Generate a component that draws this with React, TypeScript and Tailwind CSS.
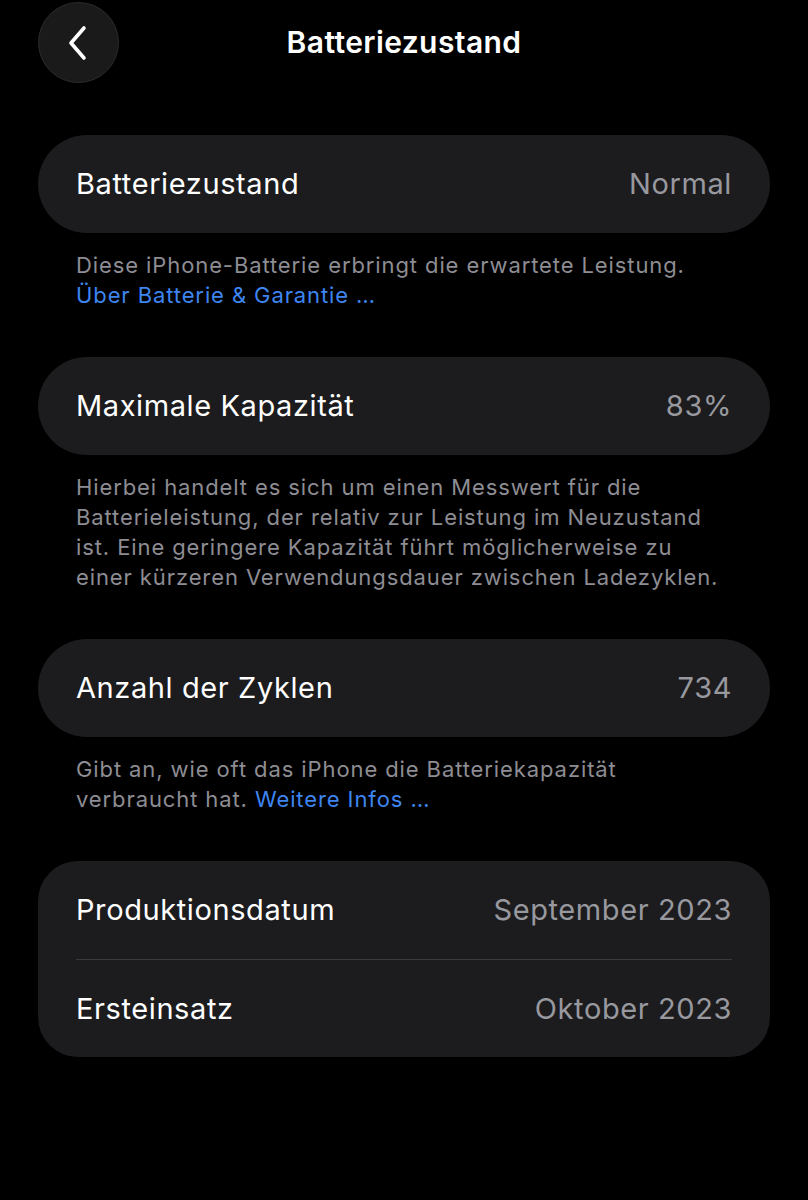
import React from "react";

type Row = { label: string; value: string };

function Card({ rows }: { rows: Row[] }) {
  const single = rows.length === 1;
  return (
    <div
      className={
        "bg-[#1c1c1e] px-[38px] " + (single ? "rounded-[49px]" : "rounded-[40px]")
      }
    >
      {rows.map((r, i) => (
        <div
          key={r.label}
          className={
            "flex h-[98px] items-center justify-between " +
            (i > 0 ? "border-t border-[#3a3a3c]" : "")
          }
        >
          <span className="text-[29px] tracking-[0.6px] text-white">{r.label}</span>
          <span className="text-[29px] tracking-[0.6px] text-[#98989f]">{r.value}</span>
        </div>
      ))}
    </div>
  );
}

function Note({ children }: { children: React.ReactNode }) {
  return (
    <p className="mt-[17px] mb-[47px] whitespace-nowrap px-[38px] text-[22px] leading-[30px] tracking-[0.9px] text-[#8d8d93]">
      {children}
    </p>
  );
}

export default function App() {
  return (
    <div
      className="min-h-[1200px] bg-black px-[38px] antialiased"
      style={{ fontFamily: "Inter, 'Noto Sans', sans-serif" }}
    >
      <header className="relative flex h-[84px] items-center justify-center">
        <button className="absolute left-0 top-[2px] flex h-[81px] w-[81px] items-center justify-center rounded-full border border-[#2c2c2e] bg-[#1a1a1a]">
          <svg width="30" height="40" viewBox="0 0 30 40" fill="none">
            <path
              d="M20 5 L7 20 L20 35"
              stroke="white"
              strokeWidth="3.6"
              strokeLinecap="round"
              strokeLinejoin="round"
            />
          </svg>
        </button>
        <h1 className="text-[30px] font-semibold tracking-[0.4px] text-white">
          Batteriezustand
        </h1>
      </header>

      <div className="mt-[51px]">
        <Card rows={[{ label: "Batteriezustand", value: "Normal" }]} />
        <Note>
          Diese iPhone-Batterie erbringt die erwartete Leistung.
          <br />
          <span className="text-[#3e85f0]">Über Batterie &amp; Garantie …</span>
        </Note>

        <Card rows={[{ label: "Maximale Kapazität", value: "83%" }]} />
        <Note>
          Hierbei handelt es sich um einen Messwert für die
          <br />
          Batterieleistung, der relativ zur Leistung im Neuzustand
          <br />
          ist. Eine geringere Kapazität führt möglicherweise zu
          <br />
          einer kürzeren Verwendungsdauer zwischen Ladezyklen.
        </Note>

        <Card rows={[{ label: "Anzahl der Zyklen", value: "734" }]} />
        <Note>
          Gibt an, wie oft das iPhone die Batteriekapazität
          <br />
          verbraucht hat. <span className="text-[#3e85f0]">Weitere Infos …</span>
        </Note>

        <Card
          rows={[
            { label: "Produktionsdatum", value: "September 2023" },
            { label: "Ersteinsatz", value: "Oktober 2023" },
          ]}
        />
      </div>
    </div>
  );
}
